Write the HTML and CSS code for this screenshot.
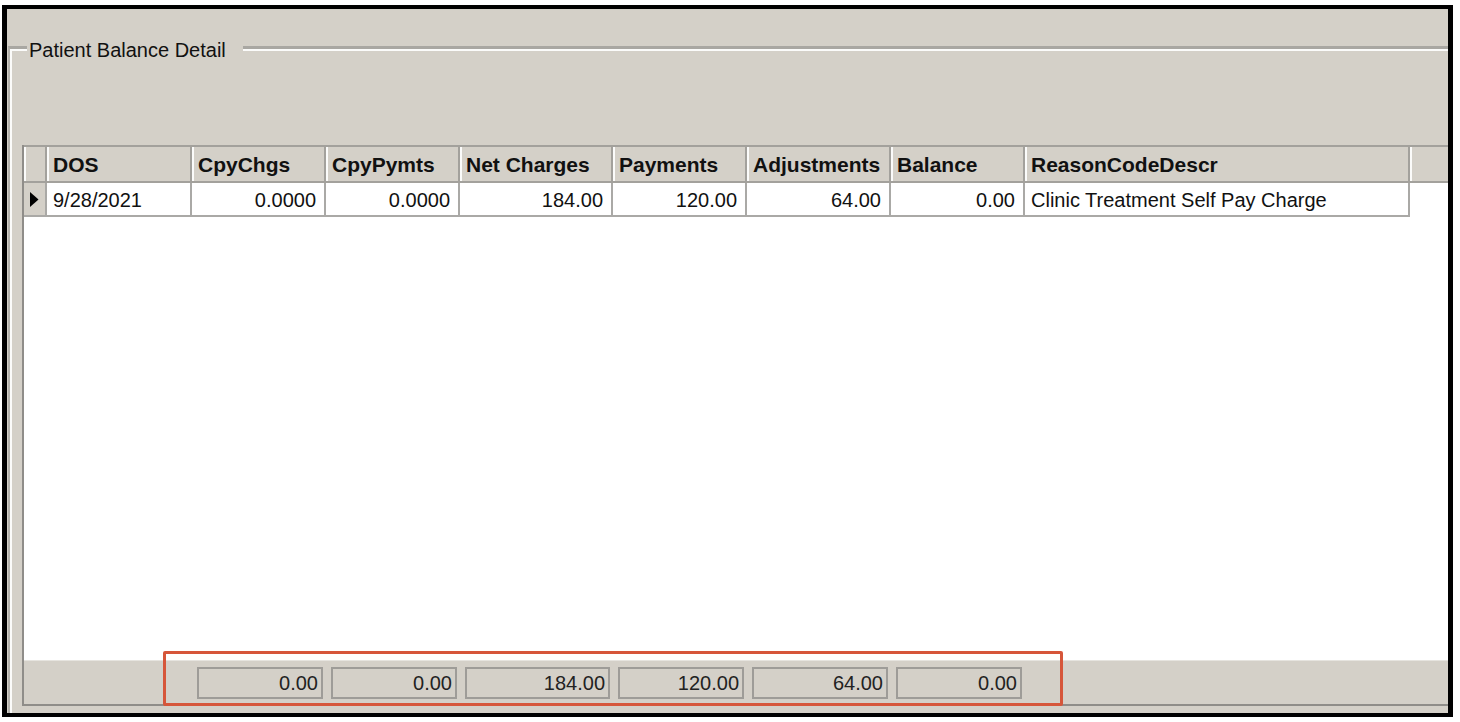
FILE: index.html
```html
<!DOCTYPE html>
<html>
<head>
<meta charset="utf-8">
<link rel="stylesheet" href="styles.css">
</head>
<body>
<div class="frame">
  <div class="groupbox">
    <span class="legend">Patient Balance Detail</span>
    <div class="grid">
      <div class="cols head">
        <div class="hc ind"></div>
        <div class="hc">DOS</div>
        <div class="hc">CpyChgs</div>
        <div class="hc">CpyPymts</div>
        <div class="hc">Net Charges</div>
        <div class="hc">Payments</div>
        <div class="hc">Adjustments</div>
        <div class="hc">Balance</div>
        <div class="hc">ReasonCodeDescr</div>
        <div class="hc last"></div>
      </div>
      <div class="cols row">
        <div class="dc ind"><svg class="arrow" width="9" height="15" viewBox="0 0 9 15"><polygon points="0,0 8.5,7.5 0,15" fill="#000"/></svg></div>
        <div class="dc">9/28/2021</div>
        <div class="dc num">0.0000</div>
        <div class="dc num">0.0000</div>
        <div class="dc num">184.00</div>
        <div class="dc num">120.00</div>
        <div class="dc num">64.00</div>
        <div class="dc num">0.00</div>
        <div class="dc">Clinic Treatment Self Pay Charge</div>
      </div>
      <div class="body"></div>
      <div class="cols foot">
        <div></div>
        <div></div>
        <div class="box">0.00</div>
        <div class="box">0.00</div>
        <div class="box">184.00</div>
        <div class="box">120.00</div>
        <div class="box">64.00</div>
        <div class="box">0.00</div>
      </div>
    </div>
  </div>
  <div class="highlight"></div>
</div>
</body>
</html>
```

FILE: styles.css
```css
html, body {
  margin: 0;
  padding: 0;
  background: #fff;
}
body {
  width: 1460px;
  height: 722px;
  overflow: hidden;
  font-family: "Liberation Sans", Arial, sans-serif;
  color: #111;
}
.frame {
  position: relative;
  box-sizing: border-box;
  margin: 5px 0 0 2px;
  width: 1451px;
  height: 712px;
  border-style: solid;
  border-color: #000;
  border-width: 4px 5px 4px 5px;
  background: #d4d0c8;
  display: flex;
  flex-direction: column;
  overflow: hidden;
}
.groupbox {
  position: relative;
  flex: 1;
  display: flex;
  flex-direction: column;
  margin: 37px 0 0 1px;
  border-top: 3px solid #a9a7a2;
  border-left: 2px solid #b4b2ad;
  box-shadow: inset 2px 2px 0 #fbfbfa;
  padding: 96px 0 7px 12px;
}
.legend {
  position: absolute;
  left: 17px;
  top: -10px;
  padding: 0 17px 0 2px;
  background: #d4d0c8;
  font-size: 20px;
  line-height: 22px;
  color: #111;
}
.grid {
  flex: 1;
  display: flex;
  flex-direction: column;
  background: #fff;
  border-left: 2px solid #8f8d89;
  border-bottom: 2px solid #8f8d89;
}
.cols {
  display: grid;
  grid-template-columns: 23px 145px 134px 134px 153px 134px 144px 134px 385px 38px;
}
.head {
  height: 38px;
  background: #d4d0c8;
}
.hc {
  box-sizing: border-box;
  border-top: 2px solid #a3a19c;
  border-right: 2px solid #a3a19c;
  border-bottom: 2px solid #a3a19c;
  box-shadow: inset 2px 0 0 #fbfbfa;
  padding: 2px 0 0 6px;
  font-weight: bold;
  font-size: 21px;
  line-height: 32px;
  white-space: nowrap;
  overflow: hidden;
  color: #111;
}
.hc.last {
  border-right: none;
}
.row {
  height: 34px;
}
.dc {
  box-sizing: border-box;
  border-right: 2px solid #aaa9a6;
  border-bottom: 2px solid #aaa9a6;
  padding: 2px 6px 0 6px;
  font-size: 20px;
  line-height: 30px;
  white-space: nowrap;
  overflow: hidden;
  background: #fff;
}
.dc.num {
  text-align: right;
  padding-right: 8px;
}
.dc.ind {
  background: #d4d0c8;
  display: flex;
  align-items: center;
  padding: 1px 0 0 6px;
}
.arrow {
  display: block;
  flex: none;
}
.body {
  flex: 1;
}
.foot {
  height: 44px;
  box-sizing: border-box;
  background: #d4d0c8;
  padding-top: 6px;
  border-top: 1px solid #e6e4df;
  align-items: start;
}
.box {
  box-sizing: border-box;
  height: 32px;
  margin: 0 3px 0 5px;
  border: 2px solid #9e9c98;
  background: #d4d0c8;
  text-align: right;
  padding-right: 3px;
  font-size: 20px;
  line-height: 28px;
  color: #222;
}
.highlight {
  position: absolute;
  left: 156px;
  top: 642px;
  width: 900px;
  height: 55px;
  box-sizing: border-box;
  border: 3px solid #d6563a;
  border-radius: 2px;
}
```
